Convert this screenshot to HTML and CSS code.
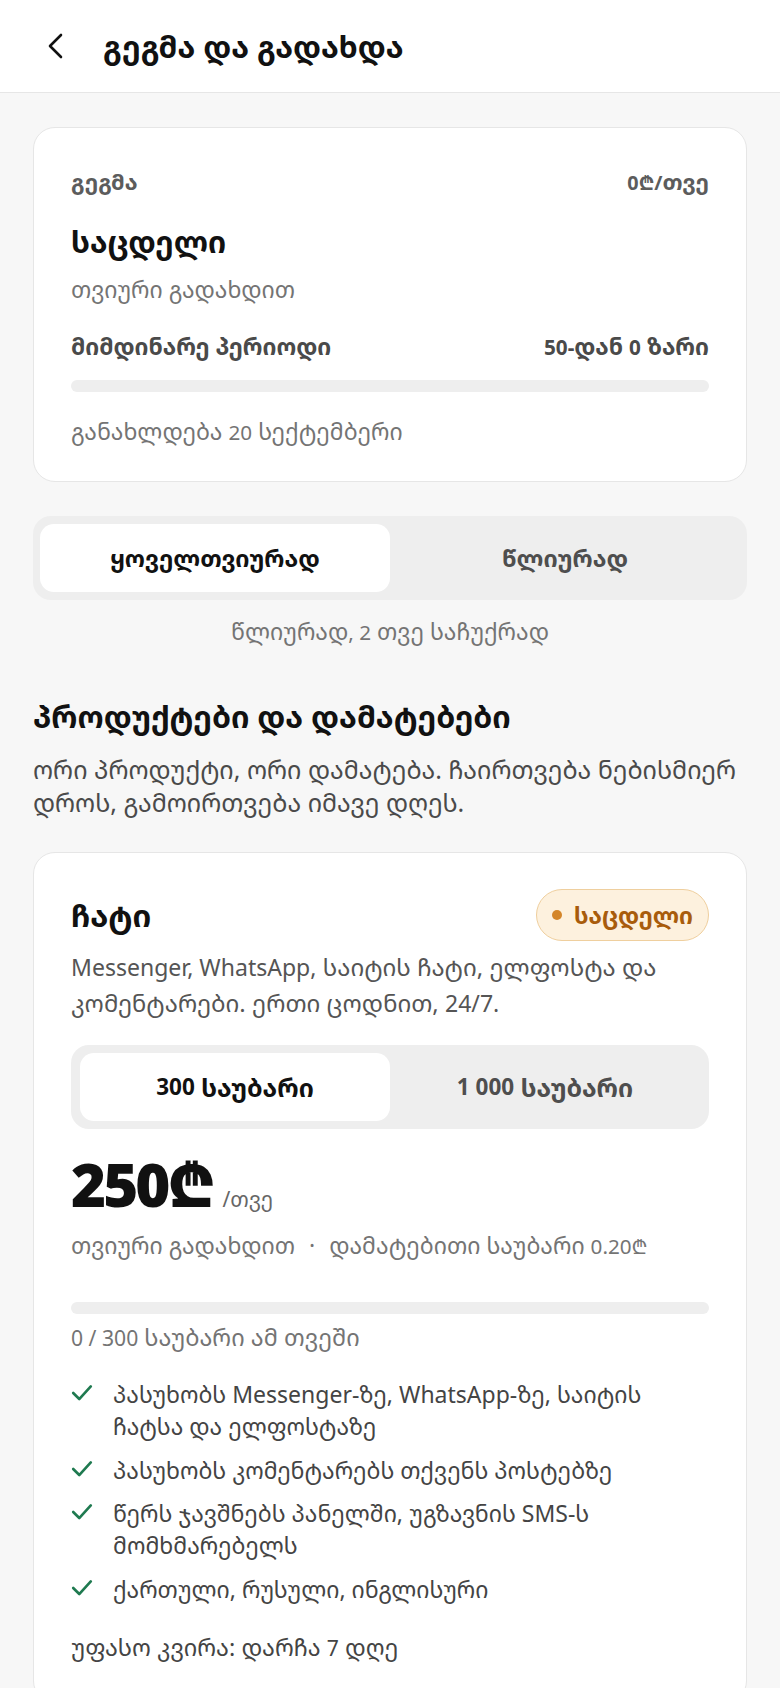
FILE: index.html
```html
<!DOCTYPE html>
<html lang="ka">
<head>
<meta charset="utf-8">
<title>გეგმა და გადახდა</title>
<link rel="stylesheet" href="styles.css">
</head>
<body>
<header class="topbar">
  <svg class="back" viewBox="0 0 20 28" width="20" height="28" aria-hidden="true"><polyline points="16,3 5,14 16,25"/></svg>
  <h1 class="title">გეგმა და გადახდა</h1>
</header>
<main class="content">
  <section class="card plan">
    <div class="row head"><span>გეგმა</span><span><span class="l">0₾/</span>თვე</span></div>
    <div class="plan-name">საცდელი</div>
    <div class="muted sub">თვიური გადახდით</div>
    <div class="row period"><span>მიმდინარე პერიოდი</span><span><span class="l">50-</span>დან <span class="l">0</span> ზარი</span></div>
    <div class="bar"></div>
    <div class="muted renew">განახლდება <span class="l">20</span> სექტემბერი</div>
  </section>

  <div class="seg">
    <div class="seg-item active">ყოველთვიურად</div>
    <div class="seg-item">წლიურად</div>
  </div>
  <p class="seg-note">წლიურად<span class="l">, 2</span> თვე საჩუქრად</p>

  <h2 class="section-title">პროდუქტები და დამატებები</h2>
  <p class="section-desc">ორი პროდუქტი, ორი დამატება. ჩაირთვება ნებისმიერ<br>დროს, გამოირთვება იმავე დღეს.</p>

  <section class="card product">
    <div class="product-head">
      <h3 class="product-name">ჩატი</h3>
      <span class="badge"><span class="dot"></span>საცდელი</span>
    </div>
    <p class="product-desc"><span class="l">Messenger, WhatsApp,</span> საიტის ჩატი, ელფოსტა და<br>კომენტარები. ერთი ცოდნით, <span class="l">24/7.</span></p>
    <div class="seg inner">
      <div class="seg-item active"><span class="l">300</span>&nbsp;საუბარი</div>
      <div class="seg-item"><span class="l">1 000</span>&nbsp;საუბარი</div>
    </div>
    <div class="price"><span class="amount">250₾</span><span class="per">/თვე</span></div>
    <div class="muted price-note">თვიური გადახდით <span class="sep">·</span> დამატებითი საუბარი <span class="l">0.20₾</span></div>
    <div class="bar usage"></div>
    <div class="muted usage-note"><span class="l">0 / 300</span> საუბარი ამ თვეში</div>
    <ul class="features">
      <li><svg class="check" viewBox="0 0 20 16" aria-hidden="true"><polyline points="2,8 7.5,13.5 18,2"/></svg><span>პასუხობს <span class="l">Messenger-</span>ზე, <span class="l">WhatsApp-</span>ზე, საიტის<br>ჩატსა და ელფოსტაზე</span></li>
      <li><svg class="check" viewBox="0 0 20 16" aria-hidden="true"><polyline points="2,8 7.5,13.5 18,2"/></svg><span>პასუხობს კომენტარებს თქვენს პოსტებზე</span></li>
      <li><svg class="check" viewBox="0 0 20 16" aria-hidden="true"><polyline points="2,8 7.5,13.5 18,2"/></svg><span>წერს ჯავშნებს პანელში, უგზავნის <span class="l">SMS-</span>ს<br>მომხმარებელს</span></li>
      <li><svg class="check" viewBox="0 0 20 16" aria-hidden="true"><polyline points="2,8 7.5,13.5 18,2"/></svg><span>ქართული, რუსული, ინგლისური</span></li>
    </ul>
    <div class="trial">უფასო კვირა: დარჩა <span class="l">7</span> დღე</div>
  </section>
</main>
</body>
</html>
```

FILE: styles.css
```css
* { box-sizing: border-box; }
html, body { margin: 0; padding: 0; }
body {
  background: #f7f7f7;
  font-family: "Noto Sans", "Noto Sans Georgian", sans-serif;
  color: #111;
}
.l { font-family: "Noto Sans", sans-serif; font-size: 0.9em; line-height: 1; }

.topbar {
  height: 93px;
  background: #fff;
  border-bottom: 1px solid #e6e6e6;
  display: flex;
  align-items: center;
  padding-left: 45px;
  gap: 38px;
}
.back { fill: none; stroke: #111; stroke-width: 2.6; stroke-linecap: round; stroke-linejoin: round; }
.title { margin: 0; font-size: 30.5px; font-weight: 700; line-height: 38px; }

.content { padding: 34px 33px 0; }

.card {
  background: #fff;
  border: 1px solid #e6e6e6;
  border-radius: 22px;
}
.plan { padding: 39px 37px 37px; }
.row { display: flex; justify-content: space-between; align-items: center; }
.head { font-size: 22px; font-weight: 700; color: #5c5c5c; line-height: 28px; }
.plan-name { margin-top: 30px; font-size: 30px; font-weight: 700; line-height: 34px; }
.muted { color: #747474; font-size: 23px; line-height: 26px; }
.sub { margin-top: 17px; }
.period { margin-top: 30px; font-size: 23px; font-weight: 700; color: #4a4a4a; line-height: 28px; }
.bar { margin-top: 20px; height: 12px; border-radius: 6px; background: #eeeeee; }
.renew { margin-top: 26px; }

.seg {
  margin-top: 34px;
  height: 84px;
  background: #eeeeee;
  border-radius: 18px;
  padding: 8px 7px;
  display: grid;
  grid-template-columns: 1fr 1fr;
}
.seg-item {
  display: flex; align-items: center; justify-content: center;
  font-size: 23.5px; font-weight: 700; color: #4e4e4e;
  border-radius: 14px;
}
.seg-item.active { background: #fff; color: #111; }

.seg-note { margin: 18px 0 0; text-align: center; color: #747474; font-size: 23px; line-height: 26px; }

.section-title { margin: 53px 0 0; font-size: 30.5px; font-weight: 700; line-height: 38px; }
.section-desc { margin: 18px 0 0; font-size: 25px; line-height: 33px; color: #4a4a4a; }

.product { margin-top: 33px; padding: 36px 37px 40px; }
.product-head { display: flex; justify-content: space-between; align-items: center; }
.product-name { margin: 0; font-size: 31px; font-weight: 700; line-height: 36px; }
.badge {
  display: inline-flex; align-items: center; gap: 12px;
  height: 52px; padding: 0 15px 0 15px;
  border-radius: 26px;
  background: #fdf1de;
  border: 1.5px solid #efcf9e;
  color: #a85c0c;
  font-size: 23px; font-weight: 700;
}
.dot { width: 10px; height: 10px; border-radius: 50%; background: #d4862a; }
.product-desc { margin: 8px 0 0; font-size: 24px; line-height: 36px; color: #555; }
.product-desc .l { font-size: 0.96em; }
.seg.inner { margin-top: 24px; height: 84px; padding: 8px 9px; }
.seg.inner .seg-item { font-size: 25px; }
.price { margin-top: 22px; display: flex; align-items: baseline; gap: 10px; }
.amount { font-size: 60px; font-weight: 900; letter-spacing: -3px; line-height: 66px; }
.per { font-size: 21px; color: #666; }
.price-note { margin-top: 15px; font-size: 23px; }
.sep { margin: 0 8px; }
.usage { margin-top: 44px; }
.usage-note { margin-top: 10px; font-size: 23.5px; }
.features { list-style: none; margin: 28px 0 0; padding: 0; display: flex; flex-direction: column; gap: 11.5px; }
.features li { display: flex; gap: 20px; font-size: 23px; line-height: 32px; color: #444; }
.features .l { font-size: 1em; }
.check { flex: none; width: 22px; height: 18px; margin-top: 6px; fill: none; stroke: #1f7a50; stroke-width: 2.4; stroke-linecap: round; stroke-linejoin: round; }
.trial { margin-top: 27px; font-size: 23.5px; line-height: 30px; color: #444; }
```
